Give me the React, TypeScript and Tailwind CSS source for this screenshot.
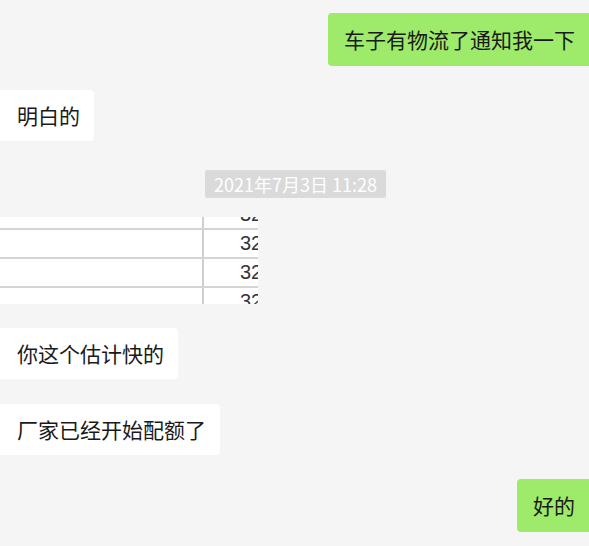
const font = { fontFamily: '"Microsoft YaHei", "Noto Sans CJK SC", "Noto Sans", sans-serif' };

function LeftBubble({ text, className = "" }: { text: string; className?: string }) {
  return (
    <div className={`flex ${className}`}>
      <div className="flex h-[51px] items-center rounded-r-[4px] bg-white pl-[17px] pr-[14px] text-[21px] text-[#1a1a1a]">
        {text}
      </div>
    </div>
  );
}

function RightBubble({ text, className = "" }: { text: string; className?: string }) {
  return (
    <div className={`flex justify-end ${className}`}>
      <div className="-mr-[12px] flex h-[53px] items-center rounded-[4px] bg-[#9eea6a] pl-[16px] pr-[26px] text-[21px] text-[#1a1a1a]">
        {text}
      </div>
    </div>
  );
}

function TableShot() {
  const rows = ["32", "32", "32", "32"];
  return (
    <div className="mt-[19px] h-[87px] w-[258px] overflow-hidden rounded-r-[3px] bg-white">
      <div className="-mt-[16px]">
        {rows.map((r, i) => (
          <div key={i} className="flex h-[29px] border-b-2 border-[#d4d4d4]">
            <div className="w-[204px] border-r-2 border-[#cfcfcf]" />
            <div className="flex-1 overflow-hidden whitespace-nowrap pl-[36px] text-[20px] leading-[27px] text-[#333]" style={{ fontFamily: '"Liberation Sans", sans-serif' }}>
              {r}
            </div>
          </div>
        ))}
      </div>
    </div>
  );
}

export default function App() {
  return (
    <div className="h-[546px] w-[589px] overflow-hidden bg-[#f5f5f5] pt-[13px]" style={font}>
      <RightBubble text="车子有物流了通知我一下" />
      <LeftBubble text="明白的" className="mt-[24px]" />
      <div className="mt-[29px] flex justify-center pl-[2px]">
        <div className="rounded-[2px] bg-[#dadada] px-[9px] text-[18px] leading-[28px] text-white">2021年7月3日 11:28</div>
      </div>
      <TableShot />
      <LeftBubble text="你这个估计快的" className="mt-[24px]" />
      <LeftBubble text="厂家已经开始配额了" className="mt-[25px]" />
      <RightBubble text="好的" className="mt-[24px]" />
    </div>
  );
}
